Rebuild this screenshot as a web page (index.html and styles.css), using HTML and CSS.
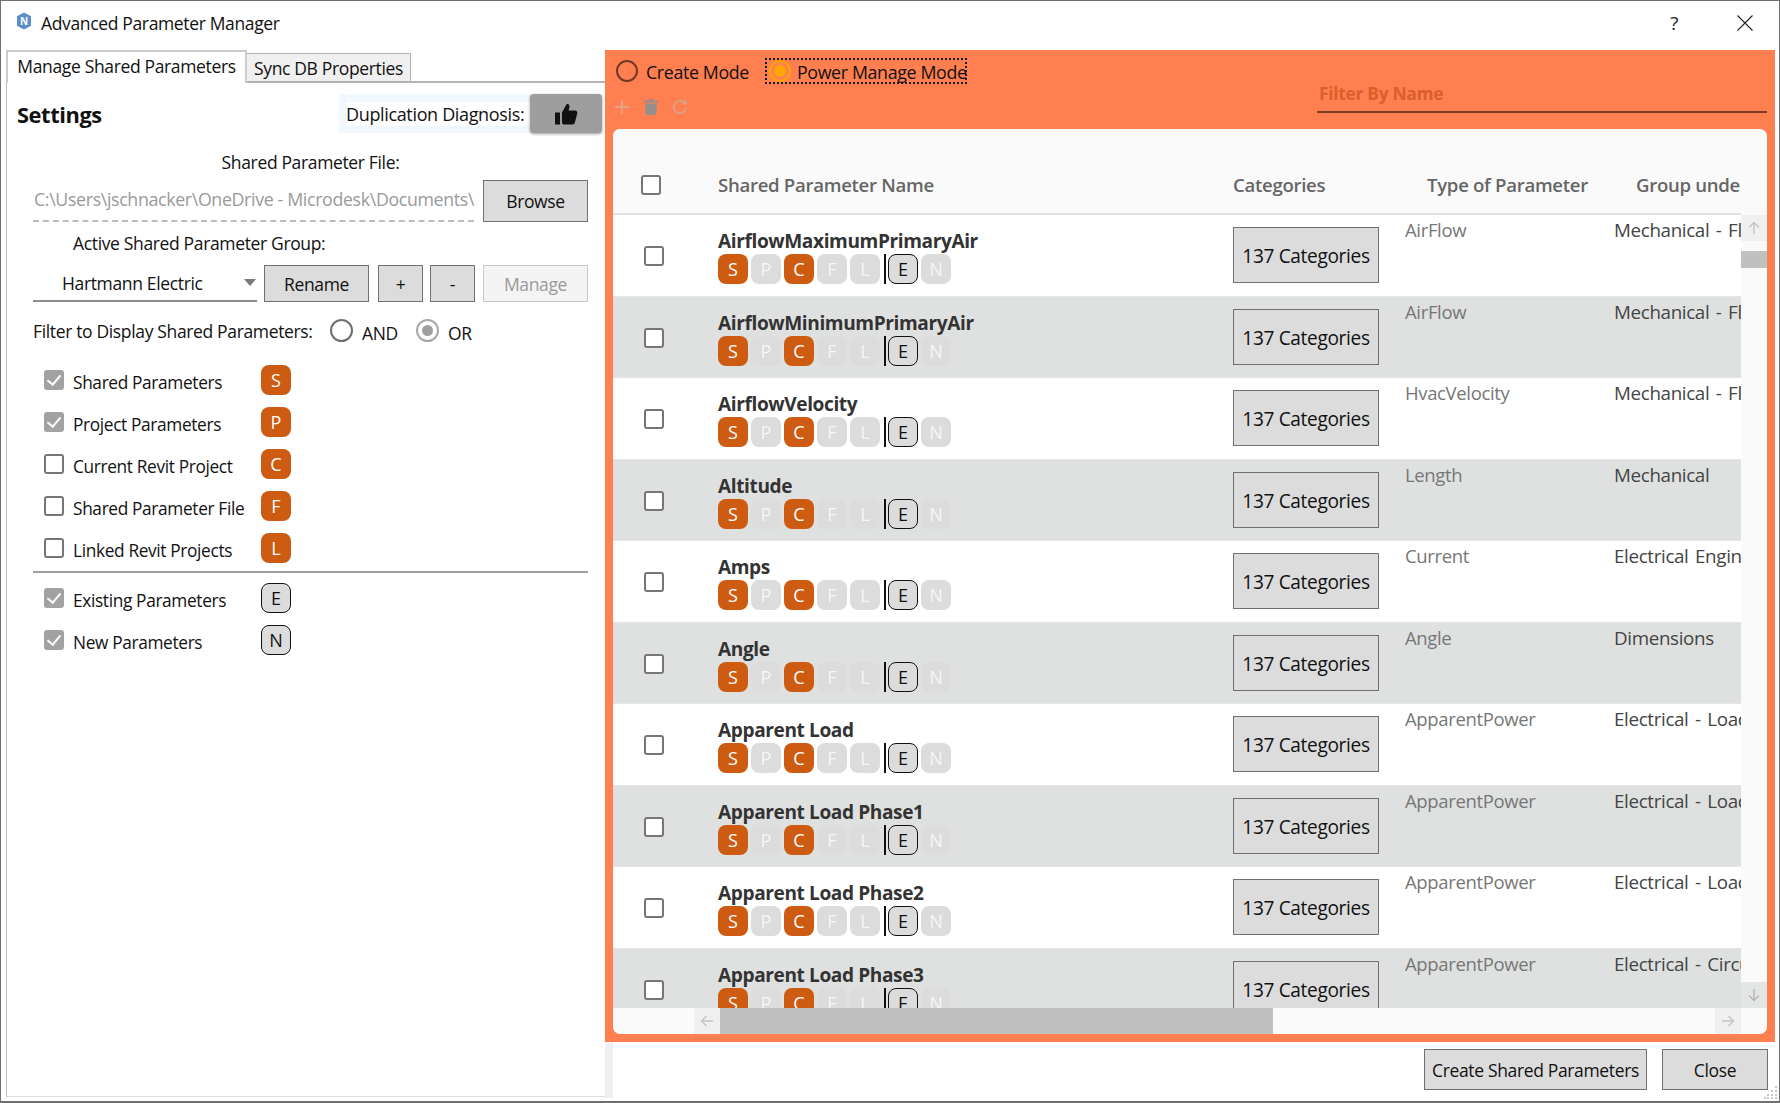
FILE: index.html
```html
<!DOCTYPE html>
<html lang="en">
<head>
<meta charset="utf-8">
<title>Advanced Parameter Manager</title>
<link rel="stylesheet" href="styles.css">
</head>
<body>
<div class="window">
  <header class="titlebar">
    <svg class="logo" width="16" height="18" viewBox="0 0 16 18"><path d="M8 0.5 15 4.2V13.8L8 17.5 1 13.8V4.2Z" fill="#5b8ecb"/><text x="8" y="12.6" text-anchor="middle" class="logo-n">N</text></svg>
    <span class="title">Advanced Parameter Manager</span>
    <span class="help">?</span>
    <svg class="closex" width="16" height="16" viewBox="0 0 16 16"><path d="M0.5 0.5 15.5 15.5M15.5 0.5 0.5 15.5" stroke="#222" stroke-width="1.1" fill="none"/></svg>
  </header>
  <main class="main">
    <section class="leftpane">
      <nav class="tabs">
        <div class="tab active">Manage Shared Parameters</div>
        <div class="tab">Sync DB Properties</div>
      </nav>
      <div class="tabbody">
        <div class="settings-head">
          <h1 class="settings-title">Settings</h1>
          <div class="diag">
            <span class="diag-label">Duplication Diagnosis:</span>
            <button class="diag-btn"><svg width="24" height="22" viewBox="0 0 24 22"><path d="M1 9.5H6V21.5H1ZM8 9.5 12.5 1.2C14.6 0.6 16 2.2 15.4 4.4L14.6 7.5H21C22.8 7.5 23.6 9 23.2 10.4L20.9 19.6C20.5 20.9 19.6 21.5 18.4 21.5H10.4C9 21.5 8 20.6 8 19.2Z" fill="#111"/></svg></button>
          </div>
        </div>
        <div class="form">
          <div class="center-label">Shared Parameter File:</div>
          <div class="file-row">
            <div class="path">C:\Users\jschnacker\OneDrive - Microdesk\Documents\</div>
            <button class="btn w105 h42">Browse</button>
          </div>
          <div class="group-label">Active Shared Parameter Group:</div>
          <div class="group-row">
            <div class="combo"><span>Hartmann Electric</span><i class="arrow"></i></div>
            <button class="btn w105">Rename</button>
            <button class="btn w45 plus">+</button>
            <button class="btn w45">-</button>
            <button class="btn w105 disabled">Manage</button>
          </div>
          <div class="filter-row">
            <span class="filter-label">Filter to Display Shared Parameters:</span>
            <i class="radio gray"></i><span class="radio-text and">AND</span>
            <i class="radio gray on"></i><span class="radio-text">OR</span>
          </div>
          <ul class="checks">
            <li class="check-row"><i class="cb checked"></i><span class="check-label">Shared Parameters</span><b class="tag orange">S</b></li>
            <li class="check-row"><i class="cb checked"></i><span class="check-label">Project Parameters</span><b class="tag orange">P</b></li>
            <li class="check-row"><i class="cb"></i><span class="check-label">Current Revit Project</span><b class="tag orange">C</b></li>
            <li class="check-row"><i class="cb"></i><span class="check-label">Shared Parameter File</span><b class="tag orange">F</b></li>
            <li class="check-row"><i class="cb"></i><span class="check-label">Linked Revit Projects</span><b class="tag orange">L</b></li>
          </ul>
          <hr class="divider">
          <ul class="checks second">
            <li class="check-row"><i class="cb checked"></i><span class="check-label">Existing Parameters</span><b class="tag outline">E</b></li>
            <li class="check-row"><i class="cb checked"></i><span class="check-label">New Parameters</span><b class="tag outline">N</b></li>
          </ul>
        </div>
      </div>
    </section>
    <section class="rightpane">
      <div class="orange-panel">
        <div class="toolbar">
          <div class="toolbar-left">
            <div class="modes">
              <label class="mode"><i class="radio dark"></i><span>Create Mode</span></label>
              <label class="mode focused"><i class="radio amber"></i><span>Power Manage Mode</span></label>
            </div>
            <div class="tools">
              <svg width="18" height="18" viewBox="0 0 18 18"><path d="M9 2V16M2 9H16" stroke="#e3a585" stroke-width="1.8" fill="none"/></svg>
              <svg width="16" height="18" viewBox="0 0 16 18"><path d="M1 2.5H5.5L6.5 1H9.5L10.5 2.5H15V4.5H1ZM2 5.5H14L13.2 17H2.8Z" fill="#96908c"/></svg>
              <svg width="18" height="18" viewBox="0 0 18 18"><path d="M15 9.5A6.2 6.2 0 1 1 13 4.4" stroke="#d8a488" stroke-width="1.8" fill="none"/><path d="M15.6 1V6.4H10.2Z" fill="#d8a488"/></svg>
            </div>
          </div>
          <div class="filter-box">Filter By Name</div>
        </div>
        <div class="card">
          <div class="card-top">
            <div class="table">
              <div class="thead">
                <div class="hcb"><i class="cb"></i></div>
                <div>Shared Parameter Name</div>
                <div>Categories</div>
                <div class="hshift">Type of Parameter</div>
                <div class="hshift">Group under</div>
              </div>
              <div class="tbody">
                <div class="row">
                  <div class="rcb"><i class="cb"></i></div>
                  <div class="namecell"><div class="pname">AirflowMaximumPrimaryAir</div><div class="badges"><b class="tag orange">S</b><b class="tag off">P</b><b class="tag orange">C</b><b class="tag off">F</b><b class="tag off">L</b><i class="vbar"></i><b class="tag outline">E</b><b class="tag off">N</b></div></div>
                  <div><button class="btn catbtn">137 Categories</button></div>
                  <div class="ptype">AirFlow</div>
                  <div class="pgroup">Mechanical - Flow</div>
                </div>
                <div class="row alt">
                  <div class="rcb"><i class="cb"></i></div>
                  <div class="namecell"><div class="pname">AirflowMinimumPrimaryAir</div><div class="badges"><b class="tag orange">S</b><b class="tag off">P</b><b class="tag orange">C</b><b class="tag off">F</b><b class="tag off">L</b><i class="vbar"></i><b class="tag outline">E</b><b class="tag off">N</b></div></div>
                  <div><button class="btn catbtn">137 Categories</button></div>
                  <div class="ptype">AirFlow</div>
                  <div class="pgroup">Mechanical - Flow</div>
                </div>
                <div class="row">
                  <div class="rcb"><i class="cb"></i></div>
                  <div class="namecell"><div class="pname">AirflowVelocity</div><div class="badges"><b class="tag orange">S</b><b class="tag off">P</b><b class="tag orange">C</b><b class="tag off">F</b><b class="tag off">L</b><i class="vbar"></i><b class="tag outline">E</b><b class="tag off">N</b></div></div>
                  <div><button class="btn catbtn">137 Categories</button></div>
                  <div class="ptype">HvacVelocity</div>
                  <div class="pgroup">Mechanical - Flow</div>
                </div>
                <div class="row alt">
                  <div class="rcb"><i class="cb"></i></div>
                  <div class="namecell"><div class="pname">Altitude</div><div class="badges"><b class="tag orange">S</b><b class="tag off">P</b><b class="tag orange">C</b><b class="tag off">F</b><b class="tag off">L</b><i class="vbar"></i><b class="tag outline">E</b><b class="tag off">N</b></div></div>
                  <div><button class="btn catbtn">137 Categories</button></div>
                  <div class="ptype">Length</div>
                  <div class="pgroup">Mechanical</div>
                </div>
                <div class="row">
                  <div class="rcb"><i class="cb"></i></div>
                  <div class="namecell"><div class="pname">Amps</div><div class="badges"><b class="tag orange">S</b><b class="tag off">P</b><b class="tag orange">C</b><b class="tag off">F</b><b class="tag off">L</b><i class="vbar"></i><b class="tag outline">E</b><b class="tag off">N</b></div></div>
                  <div><button class="btn catbtn">137 Categories</button></div>
                  <div class="ptype">Current</div>
                  <div class="pgroup">Electrical Engineering</div>
                </div>
                <div class="row alt">
                  <div class="rcb"><i class="cb"></i></div>
                  <div class="namecell"><div class="pname">Angle</div><div class="badges"><b class="tag orange">S</b><b class="tag off">P</b><b class="tag orange">C</b><b class="tag off">F</b><b class="tag off">L</b><i class="vbar"></i><b class="tag outline">E</b><b class="tag off">N</b></div></div>
                  <div><button class="btn catbtn">137 Categories</button></div>
                  <div class="ptype">Angle</div>
                  <div class="pgroup">Dimensions</div>
                </div>
                <div class="row">
                  <div class="rcb"><i class="cb"></i></div>
                  <div class="namecell"><div class="pname">Apparent Load</div><div class="badges"><b class="tag orange">S</b><b class="tag off">P</b><b class="tag orange">C</b><b class="tag off">F</b><b class="tag off">L</b><i class="vbar"></i><b class="tag outline">E</b><b class="tag off">N</b></div></div>
                  <div><button class="btn catbtn">137 Categories</button></div>
                  <div class="ptype">ApparentPower</div>
                  <div class="pgroup">Electrical - Loads</div>
                </div>
                <div class="row alt">
                  <div class="rcb"><i class="cb"></i></div>
                  <div class="namecell"><div class="pname">Apparent Load Phase1</div><div class="badges"><b class="tag orange">S</b><b class="tag off">P</b><b class="tag orange">C</b><b class="tag off">F</b><b class="tag off">L</b><i class="vbar"></i><b class="tag outline">E</b><b class="tag off">N</b></div></div>
                  <div><button class="btn catbtn">137 Categories</button></div>
                  <div class="ptype">ApparentPower</div>
                  <div class="pgroup">Electrical - Loads</div>
                </div>
                <div class="row">
                  <div class="rcb"><i class="cb"></i></div>
                  <div class="namecell"><div class="pname">Apparent Load Phase2</div><div class="badges"><b class="tag orange">S</b><b class="tag off">P</b><b class="tag orange">C</b><b class="tag off">F</b><b class="tag off">L</b><i class="vbar"></i><b class="tag outline">E</b><b class="tag off">N</b></div></div>
                  <div><button class="btn catbtn">137 Categories</button></div>
                  <div class="ptype">ApparentPower</div>
                  <div class="pgroup">Electrical - Loads</div>
                </div>
                <div class="row alt">
                  <div class="rcb"><i class="cb"></i></div>
                  <div class="namecell"><div class="pname">Apparent Load Phase3</div><div class="badges"><b class="tag orange">S</b><b class="tag off">P</b><b class="tag orange">C</b><b class="tag off">F</b><b class="tag off">L</b><i class="vbar"></i><b class="tag outline">E</b><b class="tag off">N</b></div></div>
                  <div><button class="btn catbtn">137 Categories</button></div>
                  <div class="ptype">ApparentPower</div>
                  <div class="pgroup">Electrical - Circuiting</div>
                </div>
              </div>
            </div>
            <div class="vscroll">
              <div class="sbtn"><svg width="14" height="14" viewBox="0 0 14 14"><path d="M7 13V2M2 6.5 7 1.5 12 6.5" stroke="#c4c4c4" stroke-width="1.4" fill="none"/></svg></div>
              <div class="vthumb"></div>
              <div class="sbtn down"><svg width="14" height="14" viewBox="0 0 14 14"><path d="M7 1V12M2 7.5 7 12.5 12 7.5" stroke="#b4b4b4" stroke-width="1.4" fill="none"/></svg></div>
            </div>
          </div>
          <div class="hscroll">
            <div class="sbtn h"><svg width="14" height="14" viewBox="0 0 14 14"><path d="M13 7H2M6.5 2 1.5 7 6.5 12" stroke="#c4c4c4" stroke-width="1.4" fill="none"/></svg></div>
            <div class="hthumb"></div>
            <div class="sbtn h right"><svg width="14" height="14" viewBox="0 0 14 14"><path d="M1 7H12M7.5 2 12.5 7 7.5 12" stroke="#c4c4c4" stroke-width="1.4" fill="none"/></svg></div>
          </div>
        </div>
      </div>
      <footer class="footer">
        <div class="strip"></div>
        <button class="btn create">Create Shared Parameters</button>
        <button class="btn closebtn">Close</button>
        <svg class="grip" width="14" height="14" viewBox="0 0 14 14"><path d="M11 1h2v2h-2zM7 5h2v2H7zM11 5h2v2h-2zM3 9h2v2H3zM7 9h2v2H7zM11 9h2v2h-2zM0 12h2v2H0zM3 12h2v2H3zM7 12h2v2H7zM11 12h2v2h-2z" fill="#c4c8d0"/></svg>
      </footer>
    </section>
  </main>
</div>
</body>
</html>
```
FILE: styles.css
```css
* { box-sizing: border-box; }
html, body { margin: 0; padding: 0; background: #fff; }
body { font-family: "Open Sans", "Noto Sans", sans-serif; font-size: 17.5px; letter-spacing: -0.35px; color: #111; }
ul { list-style: none; margin: 0; padding: 0; }
h1 { margin: 0; }
i { display: block; font-style: normal; }
button { font: inherit; letter-spacing: inherit; color: inherit; padding: 0; }

.window { width: 1780px; height: 1103px; border: 1px solid #6f6f6f; border-bottom-width: 2px; background: #fff; overflow: hidden; display: flex; flex-direction: column; }

.titlebar { height: 48px; flex: none; display: flex; align-items: center; padding: 0 26px 5px 15px; }
.logo { flex: none; margin-right: 9px; margin-top: -3px; }
.logo-n { font: bold 10px "Open Sans", sans-serif; fill: #fff; letter-spacing: 0; }
.title { flex: 1; font-size: 17.5px; }
.help { font-size: 19px; margin-right: 59px; color: #222; }

.main { flex: 1; display: flex; min-height: 0; }

.leftpane { width: 599px; margin-left: 5px; flex: none; display: flex; flex-direction: column; height: 1047px; margin-top: 1px; }
.tabs { display: flex; align-items: flex-end; height: 33px; flex: none; border-bottom: 2px solid #b4b4b4; }
.tab { height: 30px; margin-bottom: -2px; padding: 0 6px; width: 164px; background: #f0f0f0; border: 1px solid #b4b4b4; border-width: 1px 1px 2px 0; display: flex; align-items: center; justify-content: center; white-space: nowrap; }
.tab.active { height: 33px; width: 241px; background: #fff; border: 2px solid #ccc; border-bottom: 0; position: relative; padding-bottom: 3px; }

.tabbody { flex: 1; border-left: 1px solid #b8b8b8; border-bottom: 1px solid #ddd; display: flex; flex-direction: column; }

.settings-head { margin-top: 11px; padding: 0 3px 0 10px; height: 39px; display: flex; align-items: center; justify-content: space-between; flex: none; }
.settings-title { font-size: 21.8px; font-weight: 700; color: #111; letter-spacing: -0.4px; padding-top: 2px; }
.diag { display: flex; align-items: stretch; height: 39px; width: 263px; background: #f1f7fe; padding-left: 7px; }
.diag-label { background: #fff; align-self: center; height: 24px; width: 184px; line-height: 24px; white-space: nowrap; font-size: 18px; }
.diag-btn { width: 72px; height: 39px; background: #9e9e9e; border: 0; border-radius: 4px; box-shadow: 0 1px 3px rgba(0,0,0,.4); display: flex; align-items: center; justify-content: center; }

.form { padding: 0 17px 0 26px; display: flex; flex-direction: column; }
.center-label { margin-top: 18px; height: 22px; line-height: 22px; text-align: center; padding-left: 0; }
.file-row { margin-top: 7px; display: flex; align-items: flex-start; justify-content: space-between; height: 42px; }
.path { width: 441px; height: 42px; border-bottom: 2px dashed #bcbcbc; color: #9a9a9a; white-space: nowrap; overflow: hidden; line-height: 38px; padding-left: 1px; font-size: 17.8px; }
.group-label { margin-top: 10px; height: 22px; line-height: 22px; padding-left: 40px; }
.group-row { margin-top: 11px; height: 37px; display: flex; gap: 8px; }
.combo { width: 226px; height: 37px; border-bottom: 2px solid #8c8c8c; display: flex; align-items: center; justify-content: space-between; padding: 0 1px 0 29px; margin-right: -1px; }
.arrow { width: 0; height: 0; border-left: 6px solid transparent; border-right: 6px solid transparent; border-top: 7px solid #7a7a7a; }

.btn { background: #dcdcdc; border: 1px solid #707070; display: flex; align-items: center; justify-content: center; white-space: nowrap; }
.w105 { width: 105px; flex: none; }
.h42 { height: 42px; }
.w45 { width: 45px; flex: none; }
.plus { margin-left: 1px; margin-right: -1px; }
.btn.disabled { background: #f4f4f4; border-color: #c8c8c8; color: #9a9a9a; }

.filter-row { margin-top: 18px; height: 22px; display: flex; align-items: center; }
.filter-label { width: 297px; white-space: nowrap; }
.radio { width: 23px; height: 23px; border-radius: 50%; border: 2px solid #6e6e6e; background: #fff; flex: none; position: relative; }
.radio.gray { margin-top: -2px; }
.radio.gray.on { border-color: #a8a8a8; }
.radio.gray.on::after { content: ""; position: absolute; inset: 4px; border-radius: 50%; background: #a0a0a0; }
.radio-text { padding-left: 9px; width: 53px; margin-top: 3px; }
.radio-text.and { width: 63px; }

.checks { margin-top: 23px; display: flex; flex-direction: column; gap: 12px; }
.checks.second { margin-top: 10px; }
.check-row { height: 30px; display: flex; align-items: center; padding-left: 11px; }
.cb { width: 20px; height: 20px; border: 2px solid #767676; border-radius: 3px; background: #fff; flex: none; position: relative; }
.cb.checked { background: #a2a2a2; border-color: #a2a2a2; }
.cb.checked::after { content: ""; position: absolute; left: 4px; top: 0; width: 6px; height: 11px; border: solid #fff; border-width: 0 2px 2px 0; transform: rotate(40deg); }
.check-label { width: 197px; padding-left: 9px; white-space: nowrap; margin-top: 4px; font-size: 17.3px; }
.tag { width: 30px; height: 30px; border-radius: 8px; flex: none; display: flex; align-items: center; justify-content: center; font-weight: 400; font-size: 18px; letter-spacing: 0; }
.tag.orange { background: #cd5c12; color: #fff; }
.tag.off { background: #dcdcdc; color: #f6f6f6; }
.tag.outline { background: #dcdcdc; color: #111; border: 1.5px solid #111; }
.divider { margin: 0; margin-top: 8px; border: 0; height: 2px; background: #a0a0a0; flex: none; }

.rightpane { flex: 1; display: flex; flex-direction: column; min-width: 0; height: 1053px; margin-right: 4px; }
.orange-panel { height: 992px; flex: none; margin-top: 1px; background: #ff7f50; padding: 0 8px 8px; display: flex; flex-direction: column; }
.toolbar { height: 79px; flex: none; display: flex; justify-content: space-between; }
.toolbar-left { display: flex; flex-direction: column; padding-top: 8px; }
.modes { display: flex; height: 26px; align-items: center; }
.mode { display: flex; align-items: center; height: 26px; white-space: nowrap; }
.mode span { margin-left: 8px; font-size: 17.8px; padding-top: 2px; }
.radio.dark { background: transparent; border-color: #6d3b25; width: 22px; height: 22px; margin-left: 3px; border-width: 2.5px; }
.radio.amber { background: transparent; border-color: #ffa600; width: 22px; height: 22px; border-width: 2px; margin-left: 2px; }
.radio.amber::after { content: ""; position: absolute; inset: 3px; border-radius: 50%; background: #ffa600; }
.mode:first-child { width: 152px; }
.mode.focused { width: 202px; border: 2px dotted #1a1a1a; }
.mode.focused span { margin-left: 6px; }
.tools { margin-top: 14px; display: flex; gap: 12px; align-items: center; padding-left: 0; }
.filter-box { width: 450px; height: 63px; border-bottom: 2px solid #7a3d22; padding: 30px 0 0 2px; line-height: 26px; font-size: 17.4px; font-weight: 700; color: #d9602a; letter-spacing: -0.3px; }

.card { flex: 1; min-height: 0; background: #fafafa; border-radius: 7px; overflow: hidden; display: flex; flex-direction: column; }
.card-top { flex: 1; min-height: 0; display: flex; }
.table { width: 1128px; flex: none; overflow: hidden; display: flex; flex-direction: column; }
.thead, .row { display: grid; grid-template-columns: 105px 515px 172px 209px 300px; width: 1400px; }
.thead { height: 86px; flex: none; border-bottom: 2px solid #e2e2e2; align-items: center; padding-top: 27px; color: #666; font-weight: 600; font-size: 18.6px; white-space: nowrap; letter-spacing: -0.3px; background: #fafafa; }
.hcb { padding-left: 28px; }
.hshift { padding-left: 22px; }
.tbody { flex: 1; min-height: 0; overflow: hidden; }
.row { height: 81.5px; background: #fff; border-bottom: 1px solid #e6e6e6; }
.row.alt { background: #dfe1e0; }
.rcb { padding: 31px 0 0 31px; }
.namecell { padding-top: 14px; }
.pname { height: 24px; line-height: 24px; font-weight: 700; color: #333; font-size: 19.1px; letter-spacing: -0.4px; white-space: nowrap; }
.badges { display: flex; gap: 3px; align-items: center; padding-top: 1px; }
.vbar { width: 2px; height: 30px; background: #111; margin-right: -1px; margin-left: 1px; }
.catbtn { width: 146px; height: 56px; margin-top: 12px; font-size: 19.1px; padding-top: 2px; }
.ptype { padding-top: 4px; line-height: 22px; color: #777; white-space: nowrap; font-size: 18.5px; }
.pgroup { padding-top: 4px; line-height: 22px; color: #444; white-space: nowrap; font-size: 18.8px; word-spacing: 2px; }

.vscroll { width: 26px; flex: none; padding-top: 86px; display: flex; flex-direction: column; }
.sbtn { width: 26px; height: 26px; flex: none; background: #f0f0f0; display: flex; align-items: center; justify-content: center; }
.sbtn.down { margin-top: auto; background: #e4e6e5; }
.vthumb { height: 17px; margin-top: 10px; background: #c0c0c0; flex: none; }
.hscroll { height: 26px; flex: none; display: flex; padding: 0 26px 0 81px; }
.sbtn.h { background: #f0f0f0; }
.hthumb { width: 553px; background: #c0c0c0; flex: none; }
.sbtn.right { margin-left: auto; }

.footer { flex: 1; display: flex; align-items: flex-start; padding-top: 7px; position: relative; }
.strip { width: 8px; height: 56px; background: #f0f0f0; margin-top: -7px; flex: none; margin-right: 811px; }
.create { width: 223px; height: 41px; margin-right: 16px; }
.closebtn { width: 105px; height: 41px; margin-left: -1px; width: 106px; }
.grip { position: absolute; right: -3px; bottom: 3px; }
```
